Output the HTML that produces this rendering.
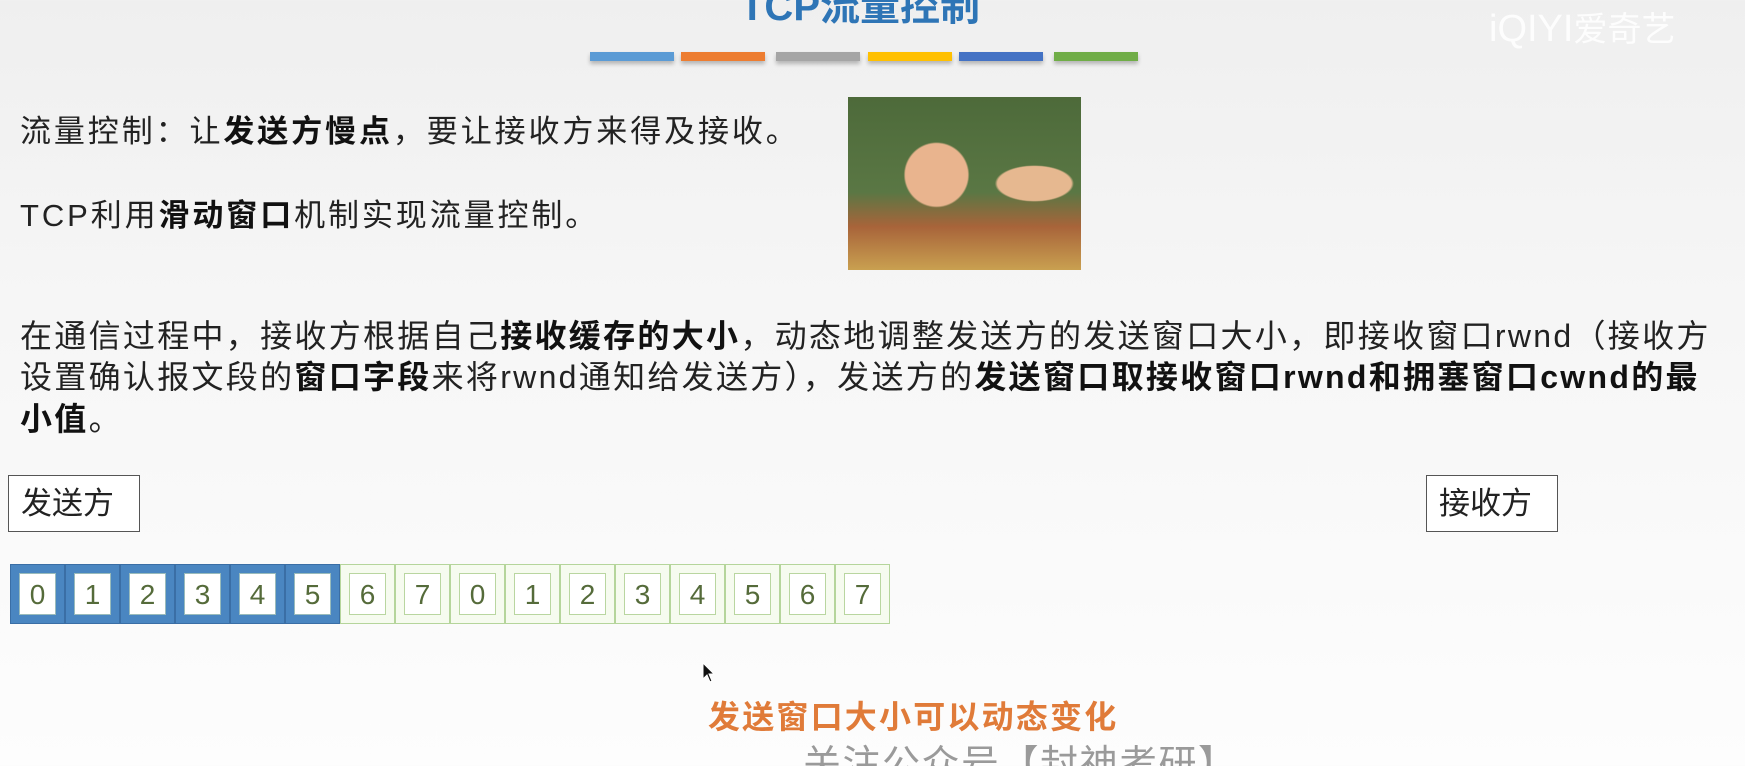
<!DOCTYPE html>
<html><head><meta charset="utf-8"><style>
html{overflow:hidden;height:766px}
body{margin:0;width:1745px;height:766px;overflow:hidden;background:linear-gradient(#efefef,#f6f6f6 40%,#fdfdfd);font-family:"Liberation Sans","Noto Sans CJK SC",sans-serif;position:relative;color:#222}
.a{position:absolute;white-space:nowrap}
.t{font-size:31px;letter-spacing:2.9px}
.p{font-size:32px;letter-spacing:2.3px}
b{font-weight:bold;color:#111}
.bar{position:absolute;top:52px;height:9px;width:84px;box-shadow:0 3px 4px rgba(0,0,0,.25)}
.box{position:absolute;top:475px;width:130px;height:55px;border:1.5px solid #555;background:#fff;font-size:31px;line-height:55px;text-indent:12px}
.cell{position:absolute;top:564px;width:55px;height:60px;box-sizing:border-box}
.cell span{position:absolute;left:8px;top:8px;right:8px;bottom:8px;background:#fff;font-size:28px;color:#556b3a;text-align:center;line-height:42px}
.bl{background:#4a86c1;border:1px solid #3a6ea5}
.bl span{border:1px solid #9bb}
.gr{background:#f6fbef;border:1px solid #b5d59b}
.gr span{border:1px solid #b9d6a0}
</style></head><body>
<div class="a" style="left:740px;top:-26px;font-size:40px;font-weight:bold;color:#2e75b6">TCP流量控制</div>
<div class="a" style="left:1489px;top:2px;font-size:38px;color:rgba(255,255,255,.85)">iQIYI<span style="font-size:34px">爱奇艺</span></div>
<div class="bar" style="left:590px;background:#5b9bd5"></div>
<div class="bar" style="left:681px;background:#ed7d31"></div>
<div class="bar" style="left:776px;background:#a5a5a5"></div>
<div class="bar" style="left:868px;background:#ffc000"></div>
<div class="bar" style="left:959px;background:#4472c4"></div>
<div class="bar" style="left:1054px;background:#70ad47"></div>
<div class="a t" style="left:20px;top:106px">流量控制：让<b>发送方慢点</b>，要让接收方来得及接收。</div>
<div class="a t" style="left:20px;top:190px">TCP利用<b>滑动窗口</b>机制实现流量控制。</div>
<div class="a" style="left:848px;top:97px;width:233px;height:173px;background:radial-gradient(circle at 38% 45%,#e9b48e 0 18%,transparent 19%),radial-gradient(ellipse at 80% 50%,#e6b890 0 14%,transparent 15%),linear-gradient(#4d6a3a,#5a7744 55%,#a8643a 75%,#c9a050)"></div>
<div class="a p" style="left:20px;top:311px">在通信过程中，接收方根据自己<b>接收缓存的大小</b>，动态地调整发送方的发送窗口大小，即接收窗口rwnd（接收方</div>
<div class="a p" style="left:20px;top:352px">设置确认报文段的<b>窗口字段</b>来将rwnd通知给发送方），发送方的<b>发送窗口取接收窗口rwnd和拥塞窗口cwnd的最</b></div>
<div class="a p" style="left:20px;top:394px"><b>小值</b>。</div>
<div class="box" style="left:8px">发送方</div>
<div class="box" style="left:1426px">接收方</div>
<div class="cell bl" style="left:10px"><span>0</span></div>
<div class="cell bl" style="left:65px"><span>1</span></div>
<div class="cell bl" style="left:120px"><span>2</span></div>
<div class="cell bl" style="left:175px"><span>3</span></div>
<div class="cell bl" style="left:230px"><span>4</span></div>
<div class="cell bl" style="left:285px"><span>5</span></div>
<div class="cell gr" style="left:340px"><span>6</span></div>
<div class="cell gr" style="left:395px"><span>7</span></div>
<div class="cell gr" style="left:450px"><span>0</span></div>
<div class="cell gr" style="left:505px"><span>1</span></div>
<div class="cell gr" style="left:560px"><span>2</span></div>
<div class="cell gr" style="left:615px"><span>3</span></div>
<div class="cell gr" style="left:670px"><span>4</span></div>
<div class="cell gr" style="left:725px"><span>5</span></div>
<div class="cell gr" style="left:780px"><span>6</span></div>
<div class="cell gr" style="left:835px"><span>7</span></div>
<svg class="a" style="left:702px;top:662px" width="14" height="22"><path d="M1 1 L1 17 L5 13 L8 20 L10 19 L7 12 L12 12 Z" fill="#111" stroke="#fff" stroke-width="1"/></svg>
<div class="a" style="left:708px;top:692px;font-size:32px;color:#e07b39;letter-spacing:2.2px;font-weight:bold">发送窗口大小可以动态变化</div>
<div class="a" style="left:803px;top:733px;font-size:38px;color:#9a9a9a;letter-spacing:1.5px">关注公众号【封神考研】</div>
</body></html>
